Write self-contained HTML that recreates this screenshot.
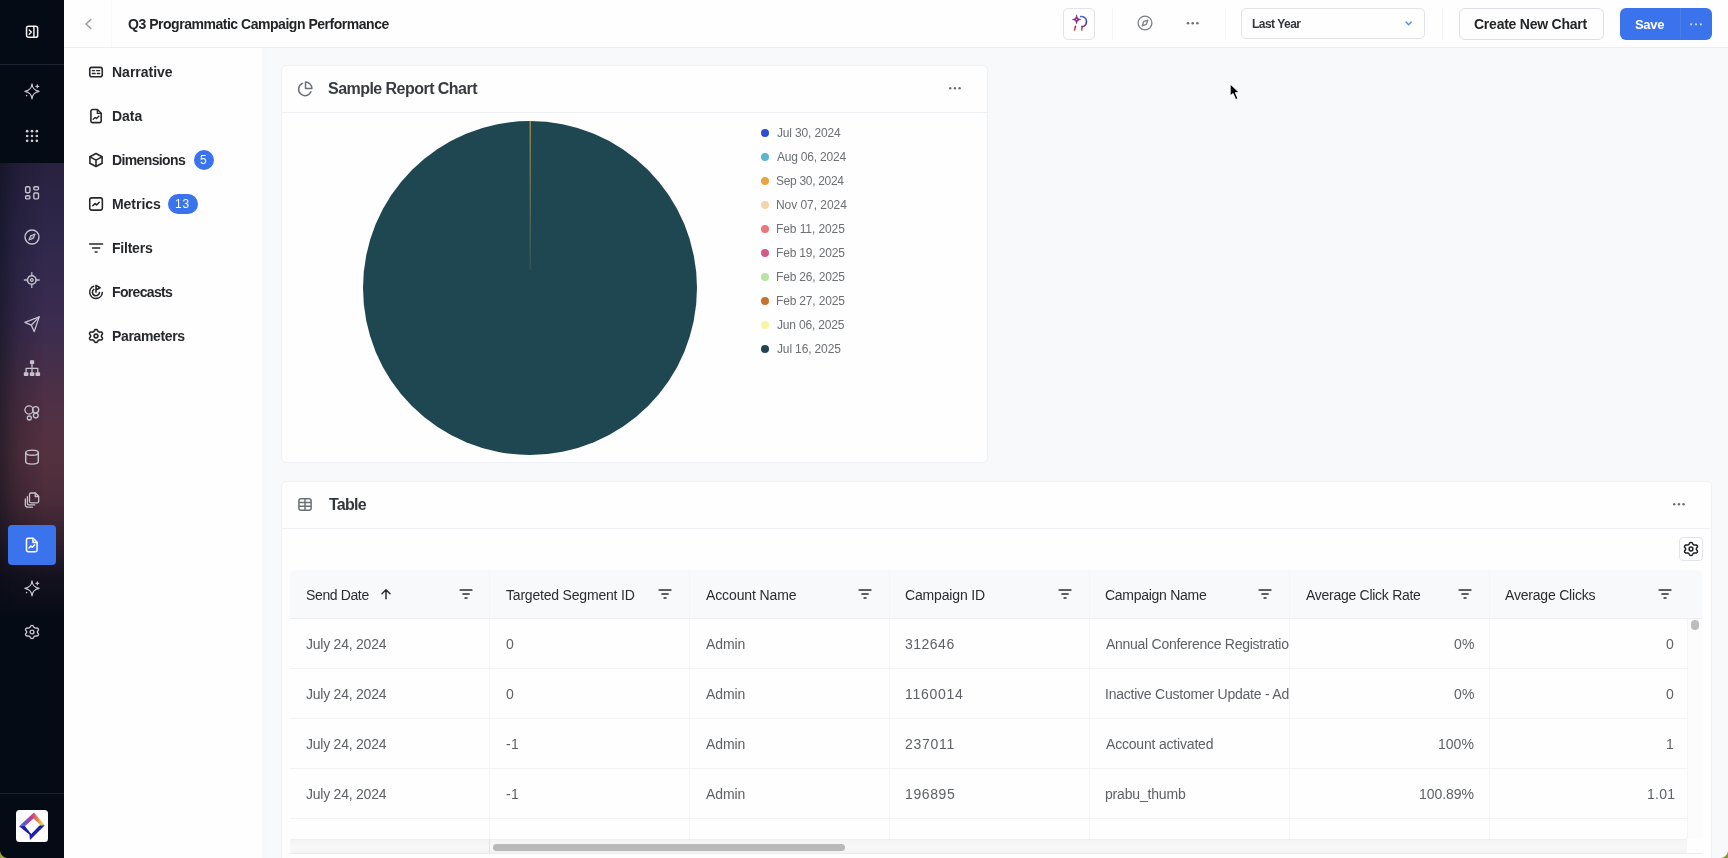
<!DOCTYPE html>
<html lang="en">
<head>
<meta charset="utf-8">
<title>Q3 Programmatic Campaign Performance</title>
<style>
*{box-sizing:border-box;margin:0;padding:0}
html,body{width:1728px;height:858px;overflow:hidden;background:#f8f9fb;font-family:"Liberation Sans",sans-serif;color:#222}
body{position:relative}
.a{position:absolute}
.t{position:absolute;white-space:nowrap;line-height:1;will-change:transform}
svg{position:absolute;overflow:visible}
#rail{position:absolute;left:0;top:0;width:64px;height:858px;background:#050b15;overflow:hidden}
#rail .g1{position:absolute;left:0;top:163px;width:64px;height:460px;background:linear-gradient(to bottom,#28213f 0px,#30284c 80px,#3b2c50 160px,#4d3046 230px,#55313f 290px,#4c2c3b 335px,#33202f 375px,#14111f 415px,#050b15 455px)}
#rail .g2{position:absolute;left:0;top:163px;width:64px;height:460px;background:linear-gradient(to right,rgba(5,11,21,.5) 0,rgba(5,11,21,.2) 28%,rgba(5,11,21,0) 70%)}
#rail .crn{position:absolute;left:0;top:850px;width:8px;height:8px;background:radial-gradient(circle at 100% 0,rgba(151,165,60,0) 7.500px,#97a53c 8.500px)}
#rail .sep{position:absolute;left:0;width:64px;height:1px;background:#1c2431}
#rail .active{position:absolute;left:8px;top:525px;width:48px;height:39.500px;border-radius:4px;background:#3a73ec}
#hdr{position:absolute;left:64px;top:0;width:1664px;height:48px;background:#fefefe;border-bottom:1px solid #eceef1}
.vd{position:absolute;width:1px;background:#f3f4f6}
.btn{position:absolute;border:1px solid #e1e3e7;border-radius:6px;background:#fefefe}
#nav{position:absolute;left:64px;top:48px;width:205px;height:810px;background:linear-gradient(to right,#fefefe 0,#fefefe 197px,#f6f7f9 199px,#f8f9fb 205px)}
.badge{position:absolute;background:#3a73ec;border-radius:10px}
.card{position:absolute;background:#fefefe;border:1px solid #f0f1f4;border-radius:5px}
.hb{position:absolute;height:1px;background:#eff0f3}
.dot{position:absolute;width:8px;height:8px;border-radius:50%}
#grid{position:absolute;left:290px;top:570px;width:1412px;height:283px;border-radius:6px 6px 4px 4px;overflow:hidden;background:#fefefe}
#grid .head{position:absolute;left:0;top:0;width:1412px;height:49px;background:#f8f9fb;border-bottom:1px solid #eceef1}
.hl{position:absolute;height:1px;background:#f2f3f5}
.vl{position:absolute;width:1px;background:#f4f5f7}
.clip{position:absolute;overflow:hidden}
.crn2{position:absolute;left:1720px;top:850px;width:8px;height:8px;background:radial-gradient(circle at 0 0,rgba(138,154,48,0) 7.500px,#8a9a30 8.500px)}

</style>
</head>
<body>
<div id="rail"><div class="g0"></div><div class="g1"></div><div class="g2"></div><div class="sep" style="top:64px"></div><div class="sep" style="top:793px"></div><div class="active"></div><svg style="left:24px;top:24px" width="16" height="16" viewBox="0 0 16 16" fill="none" stroke="#f1f1f4" stroke-width="1.5" stroke-linecap="round" stroke-linejoin="round"><rect x="2.550" y="2.350" width="11.100" height="11" rx="1.900"/><path d="M9.900 2.500v10.700"/><path d="M5.300 6l2 2.100-2 2.100"/></svg>
<svg style="left:24px;top:83.4px" width="16" height="16" viewBox="0 0 16 16" fill="none" stroke="#c6c2d0" stroke-width="1.4" stroke-linecap="round" stroke-linejoin="round"><path d="M8 1C8.500 5.600 10.200 7.400 15.100 8.400 10.200 9.400 8.500 11.200 8 15.800 7.500 11.200 5.800 9.400 .9 8.400 5.800 7.400 7.500 5.600 8 1z" stroke-width="1.300"/><path d="M13.300 1.900v2.800M11.900 3.300h2.800" stroke-width="1.200"/><circle cx="2.600" cy="12.600" r=".8" fill="#c6c2d0" stroke="none"/></svg>
<svg style="left:24px;top:127.7px" width="16" height="16" viewBox="0 0 16 16" fill="#c9c9cf" stroke="none" stroke-width="1.4" stroke-linecap="round" stroke-linejoin="round"><circle cx="3.15" cy="3.15" r="1.350"/><circle cx="3.15" cy="8" r="1.350"/><circle cx="3.15" cy="12.85" r="1.350"/><circle cx="8" cy="3.15" r="1.350"/><circle cx="8" cy="8" r="1.350"/><circle cx="8" cy="12.85" r="1.350"/><circle cx="12.85" cy="3.15" r="1.350"/><circle cx="12.85" cy="8" r="1.350"/><circle cx="12.85" cy="12.85" r="1.350"/></svg>
<svg style="left:24px;top:184.5px" width="16" height="16" viewBox="0 0 16 16" fill="none" stroke="#c6c2d0" stroke-width="1.4" stroke-linecap="round" stroke-linejoin="round"><rect x="1.600" y="1.700" width="4.300" height="6" rx="1.100"/><rect x="9.800" y="1.700" width="4.700" height="3.200" rx="1.100"/><rect x="1.600" y="10.700" width="4.300" height="3.200" rx="1.100"/><rect x="9.800" y="8" width="4.700" height="5.900" rx="1.100"/></svg>
<svg style="left:24px;top:228.7px" width="16" height="16" viewBox="0 0 16 16" fill="none" stroke="#c6c2d0" stroke-width="1.4" stroke-linecap="round" stroke-linejoin="round"><circle cx="8" cy="8" r="7"/><path d="M11 5L9.300 9.300 5 11 6.700 6.700z" fill="#c6c2d0" fill-opacity=".35" stroke-width="1.200"/></svg>
<svg style="left:24px;top:272.2px" width="16" height="16" viewBox="0 0 16 16" fill="none" stroke="#c6c2d0" stroke-width="1.4" stroke-linecap="round" stroke-linejoin="round"><circle cx="7.800" cy="8" r="4.300" stroke-width="1.600"/><circle cx="7.800" cy="8" r="1.300" stroke-width="1.300"/><path d="M7.800 .6v2.800M7.800 12.600v2.800M.4 8h2.800M12.400 8h2.800" stroke-width="1.300"/></svg>
<svg style="left:24px;top:316.2px" width="16" height="16" viewBox="0 0 16 16" fill="none" stroke="#c6c2d0" stroke-width="1.4" stroke-linecap="round" stroke-linejoin="round"><path d="M15.200 .9L.9 6.300l6.400 2.900 2.900 6.400z" stroke-width="1.300"/><path d="M15.200 .9L7.300 9.200" stroke-width="1.300"/></svg>
<svg style="left:24px;top:360.4px" width="16" height="16" viewBox="0 0 16 16" fill="none" stroke="#c6c2d0" stroke-width="1.4" stroke-linecap="round" stroke-linejoin="round"><g fill="#c6c2d0" stroke="none"><rect x="5.900" y=".3" width="4.300" height="3.700" rx=".7"/><rect x="-.2" y="12.200" width="4.600" height="3.800" rx=".7"/><rect x="5.800" y="12.200" width="4.600" height="3.800" rx=".7"/><rect x="11.500" y="12.200" width="4.600" height="3.800" rx=".7"/></g><path d="M8 4v8M2.100 12V8.300h11.700V12" stroke-width="1.300"/></svg>
<svg style="left:24px;top:404.7px" width="16" height="16" viewBox="0 0 16 16" fill="none" stroke="#c6c2d0" stroke-width="1.3" stroke-linecap="round" stroke-linejoin="round"><circle cx="5" cy="5" r="4.100"/><circle cx="11.600" cy="4.800" r="3.100"/><circle cx="11.800" cy="10.600" r="2.400"/><circle cx="5.300" cy="13" r="2"/></svg>
<svg style="left:24px;top:448.5px" width="16" height="16" viewBox="0 0 16 16" fill="none" stroke="#c6c2d0" stroke-width="1.4" stroke-linecap="round" stroke-linejoin="round"><ellipse cx="8" cy="3.700" rx="6.300" ry="2.600"/><path d="M1.700 3.700v8.800c0 1.500 2.800 2.600 6.300 2.600s6.300-1.100 6.300-2.600V3.700"/></svg>
<svg style="left:24px;top:491.8px" width="16" height="16" viewBox="0 0 16 16" fill="none" stroke="#c6c2d0" stroke-width="1.3" stroke-linecap="round" stroke-linejoin="round"><path d="M7 1h4.400l3.300 3.300v5a1.500 1.500 0 0 1-1.500 1.500H7a1.500 1.500 0 0 1-1.500-1.500V2.500A1.500 1.500 0 0 1 7 1z"/><path d="M11.200 1.200v3.300h3.300"/><path d="M3.400 4.600v6.300a2 2 0 0 0 2 2h5.400"/><path d="M1.300 7v6a2.200 2.200 0 0 0 2.200 2.200h4.900"/></svg>
<svg style="left:24px;top:536.7px" width="16" height="16" viewBox="0 0 16 16" fill="none" stroke="#ffffff" stroke-width="1.5" stroke-linecap="round" stroke-linejoin="round"><path d="M4.200 1.300h5l3.900 3.900V13a1.700 1.700 0 0 1-1.700 1.700H4.200A1.700 1.700 0 0 1 2.500 13V3a1.700 1.700 0 0 1 1.700-1.700z"/><path d="M9 1.500v3.900h3.900"/><path d="M5 11l1.900-1.900 1.400 1.100 2.400-2.300"/></svg>
<svg style="left:24px;top:580.4px" width="16" height="16" viewBox="0 0 16 16" fill="none" stroke="#c6c2d0" stroke-width="1.4" stroke-linecap="round" stroke-linejoin="round"><path d="M8 1C8.500 5.600 10.200 7.400 15.100 8.400 10.200 9.400 8.500 11.200 8 15.800 7.500 11.200 5.800 9.400 .9 8.400 5.800 7.400 7.500 5.600 8 1z" stroke-width="1.300"/><path d="M13.300 1.900v2.800M11.900 3.300h2.800" stroke-width="1.200"/><circle cx="2.600" cy="12.600" r=".8" fill="#c6c2d0" stroke="none"/></svg>
<svg style="left:24px;top:624.3px" width="16" height="16" viewBox="0 0 16 16" fill="none" stroke="#c6c2d0" stroke-width="1.4" stroke-linecap="round" stroke-linejoin="round"><path d="M13.4 8.0 13.4 7.6 13.6 7.1 14.1 6.5 14.5 5.9 14.4 5.3 14.2 4.8 13.8 4.3 13.3 4.0 12.4 4.0 11.6 4.1 11.1 4.0 10.7 3.8 10.3 3.5 9.9 3.2 9.6 2.5 9.2 1.8 8.6 1.6 8.0 1.5 7.4 1.6 6.8 1.8 6.4 2.5 6.1 3.2 5.7 3.5 5.3 3.8 4.9 4.0 4.4 4.1 3.6 4.0 2.7 4.0 2.2 4.3 1.8 4.7 1.6 5.3 1.5 5.9 1.9 6.5 2.4 7.1 2.6 7.6 2.6 8.0 2.6 8.4 2.4 8.9 1.9 9.5 1.5 10.1 1.6 10.7 1.8 11.2 2.2 11.7 2.7 12.0 3.6 12.0 4.4 11.9 4.9 12.0 5.3 12.2 5.7 12.5 6.1 12.8 6.4 13.5 6.8 14.2 7.4 14.4 8.0 14.5 8.6 14.4 9.2 14.2 9.6 13.5 9.9 12.8 10.3 12.5 10.7 12.2 11.1 12.0 11.6 11.9 12.4 12.0 13.3 12.0 13.8 11.7 14.2 11.2 14.4 10.7 14.5 10.1 14.1 9.5 13.6 8.9 13.4 8.4z"/><circle cx="8" cy="8" r="1.9"/></svg><div style="position:absolute;left:16px;top:810px;width:32px;height:32px;border-radius:3.500px;background:#fdfdfd"></div>
<svg style="left:16px;top:810px" width="32" height="32" viewBox="0 0 32 32" fill="none">
<defs><linearGradient id="lgA" x1="3" y1="0" x2="29" y2="0" gradientUnits="userSpaceOnUse"><stop offset="0" stop-color="#4a8ef0"/><stop offset=".18" stop-color="#5a55d0"/><stop offset=".5" stop-color="#c0408a"/><stop offset=".72" stop-color="#e8884a"/><stop offset=".88" stop-color="#d8d860"/><stop offset="1" stop-color="#a8d070"/></linearGradient></defs>
<path d="M3 16.200L18 2.400 28.600 15 24.600 15.400 17.600 8.600 8.600 16.400z" fill="url(#lgA)"/>
<path d="M3 16.200L28.800 15.200 14 30 13.400 24.400z" fill="#1d1fa6"/>
<path d="M9 16.300L17.600 9.600 23.600 15.600 15.200 24z" fill="#fdfdfd"/>
</svg><div class="crn"></div></div>
<!-- HEADER -->
<div id="hdr"></div>
<svg style="left:84px;top:17px" width="10" height="14" viewBox="0 0 10 14" fill="none" stroke="#96999d" stroke-width="1.400" stroke-linecap="round" stroke-linejoin="round"><path d="M6.8 2.4L2 7l4.8 4.6"/></svg>
<div class="vd" style="left:111px;top:0;height:47px;background:#f6f7f9"></div>
<div class="btn" style="left:1063px;top:7.500px;width:32px;height:32px;border-radius:5px"></div>
<svg style="left:1069px;top:13px" width="22" height="22" viewBox="0 0 22 22" fill="none" stroke-linecap="round" stroke-linejoin="round">
<defs><linearGradient id="aiA" x1="0" y1="13" x2="0" y2="18" gradientUnits="userSpaceOnUse"><stop offset="0" stop-color="#8a2080"/><stop offset=".7" stop-color="#c2407a"/><stop offset="1" stop-color="#f0b030"/></linearGradient>
<linearGradient id="aiB" x1="12" y1="3" x2="16" y2="15" gradientUnits="userSpaceOnUse"><stop offset="0" stop-color="#4a6ae0"/><stop offset=".6" stop-color="#3a3fa8"/><stop offset="1" stop-color="#b02a70"/></linearGradient></defs>
<path d="M7.6 2.2c.4 2.7 1.4 3.8 4.2 4.3-2.8.5-3.8 1.500-4.200 4.300-.4-2.800-1.400-3.800-4.200-4.300 2.800-.5 3.800-1.600 4.200-4.300z" fill="#86217f" stroke="#86217f" stroke-width=".6"/>
<circle cx="7.6" cy="6.500" r=".7" fill="#f0d8ee"/>
<path d="M11.600 3.600c3.200-.5 5.800 1.600 5.900 4.700.1 2.300-.9 3.900-2.500 4.900l-1.900.3" stroke="url(#aiB)" stroke-width="1.500"/>
<path d="M6.500 13.200L5.400 17.400" stroke="url(#aiA)" stroke-width="1.500"/>
<path d="M13.100 13.600l-.4 3.800" stroke="url(#aiA)" stroke-width="1.500"/>
</svg>
<div class="vd" style="left:1112px;top:8px;height:32px"></div>
<svg style="left:1136.500px;top:15.300px" width="16" height="16" viewBox="0 0 16 16" fill="none" stroke="#7c7f83" stroke-width="1.300" stroke-linejoin="round"><circle cx="8" cy="8" r="6.900"/><path d="M10.800 5.200L9.300 9.300 5.200 10.800 6.700 6.700z"/></svg>
<svg style="left:1186px;top:21px" width="14" height="5" viewBox="0 0 14 5" fill="#6a6d71"><circle cx="2" cy="2.300" r="1.250"/><circle cx="6.700" cy="2.300" r="1.250"/><circle cx="11.400" cy="2.300" r="1.250"/></svg>
<div class="vd" style="left:1225px;top:8px;height:32px"></div>
<div class="btn" style="left:1241px;top:7.500px;width:184px;height:31.500px;border-radius:5px"></div>
<svg style="left:1404px;top:20px" width="10" height="8" viewBox="0 0 10 8" fill="none" stroke="#4f8ce4" stroke-width="1.300" stroke-linecap="round" stroke-linejoin="round"><path d="M2 2L4.600 4.700 7.200 2"/></svg>
<div class="vd" style="left:1442px;top:8px;height:32px"></div>
<div class="btn" style="left:1459px;top:7.500px;width:144.500px;height:32px;border-color:#dcdfe3"></div>
<div class="a" style="left:1619.500px;top:7.500px;width:92.500px;height:32px;border-radius:6px;background:#3a73ec"></div>
<div class="a" style="left:1680px;top:8px;width:1px;height:31px;background:#4a7eea"></div>
<svg style="left:1689px;top:21.500px" width="14" height="5" viewBox="0 0 14 5" fill="#cfdcfa"><circle cx="2.100" cy="2.300" r="1.100"/><circle cx="7" cy="2.300" r="1.100"/><circle cx="11.900" cy="2.300" r="1.100"/></svg>

<!-- NAV -->
<div id="nav"></div>
<svg style="left:88px;top:64px" width="16" height="16" viewBox="0 0 16 16" fill="none" stroke="#26282b" stroke-width="1.600" stroke-linecap="round" stroke-linejoin="round"><rect x="1.750" y="3.400" width="12.500" height="9.400" rx="2"/><path d="M4.300 6.700h2.300M8.600 6.700h3.100M4.300 9.500h2.900M9.300 9.500h2.400" stroke-width="1.300"/></svg>
<svg style="left:88px;top:108px" width="16" height="16" viewBox="0 0 16 16" fill="none" stroke="#26282b" stroke-width="1.600" stroke-linecap="round" stroke-linejoin="round"><path d="M4.600 1.500h4.800l3.800 3.800v7.600a1.700 1.700 0 0 1-1.700 1.700H4.600a1.700 1.700 0 0 1-1.700-1.700V3.200a1.700 1.700 0 0 1 1.700-1.700z"/><path d="M9.300 1.800v3.600h3.600" stroke-width="1.300"/><path d="M5.200 11.200l1.900-1.700 1.300 1 2.500-2.300" stroke-width="1.400"/></svg>
<svg style="left:88px;top:152px" width="16" height="16" viewBox="0 0 16 16" fill="none" stroke="#26282b" stroke-width="1.600" stroke-linecap="round" stroke-linejoin="round"><path d="M8 1.500l6.100 3.300v6.400L8 14.500l-6.100-3.300V4.800z"/><path d="M2.100 4.900L8 8.100l5.900-3.200M8 8.100v6.200"/></svg>
<svg style="left:88px;top:196px" width="16" height="16" viewBox="0 0 16 16" fill="none" stroke="#26282b" stroke-width="1.600" stroke-linecap="round" stroke-linejoin="round"><rect x="1.750" y="1.900" width="12.600" height="12.200" rx="2"/><path d="M4.800 9.800l2.300-2.200 1.500 1.300 2.700-2.600" stroke-width="1.500"/></svg>
<svg style="left:88px;top:240px" width="16" height="16" viewBox="0 0 16 16" fill="none" stroke="#26282b" stroke-width="1.600" stroke-linecap="round"><path d="M1.700 4h12.800M4.600 8h7M7.200 12h1.800"/></svg>
<svg style="left:88px;top:284px" width="16" height="16" viewBox="0 0 16 16" fill="none" stroke="#26282b" stroke-width="1.600" stroke-linecap="round" stroke-linejoin="round"><path d="M5.600 2.300A6.300 6.300 0 1 0 14.300 8.500"/><path d="M5.800 5.400A3.500 3.500 0 1 0 11.400 8.600"/><path d="M8 8.300V1.400l4.100 2.300L8 6" /></svg>
<svg style="left:88px;top:328px" width="16" height="16" viewBox="0 0 16 16" fill="none" stroke="#26282b" stroke-width="1.600" stroke-linecap="round" stroke-linejoin="round"><path d="M13.4 8.0 13.4 7.6 13.6 7.1 14.1 6.5 14.5 5.9 14.4 5.3 14.2 4.8 13.8 4.3 13.3 4.0 12.4 4.0 11.6 4.1 11.1 4.0 10.7 3.8 10.3 3.5 9.9 3.2 9.6 2.5 9.2 1.8 8.6 1.6 8.0 1.5 7.4 1.6 6.8 1.8 6.4 2.5 6.1 3.2 5.7 3.5 5.3 3.8 4.9 4.0 4.4 4.1 3.6 4.0 2.7 4.0 2.2 4.3 1.8 4.7 1.6 5.3 1.5 5.9 1.9 6.5 2.4 7.1 2.6 7.6 2.6 8.0 2.6 8.4 2.4 8.9 1.9 9.5 1.5 10.1 1.6 10.7 1.8 11.2 2.2 11.7 2.7 12.0 3.6 12.0 4.4 11.9 4.9 12.0 5.3 12.2 5.7 12.5 6.1 12.8 6.4 13.5 6.8 14.2 7.4 14.4 8.0 14.5 8.6 14.4 9.2 14.2 9.6 13.5 9.9 12.8 10.3 12.5 10.7 12.2 11.1 12.0 11.6 11.9 12.4 12.0 13.3 12.0 13.8 11.7 14.2 11.2 14.4 10.7 14.5 10.1 14.1 9.5 13.6 8.9 13.4 8.4z"/><circle cx="8" cy="8" r="1.9"/></svg>
<div class="badge" style="left:193.500px;top:150px;width:20px;height:20px"></div>
<div class="badge" style="left:168px;top:194.300px;width:29.600px;height:19.400px"></div>

<!-- CHART CARD -->
<div class="card" style="left:281px;top:65px;width:707px;height:398px"></div>
<div class="hb" style="left:282px;top:112px;width:705px"></div>
<svg style="left:297px;top:80.500px" width="16" height="16" viewBox="0 0 16 16" fill="none" stroke="#6c6f73" stroke-width="1.500" stroke-linecap="round" stroke-linejoin="round"><path d="M13.900 10.800A6.400 6.400 0 1 1 5.400 2.400"/><path d="M14.900 7.500A6.400 6.400 0 0 0 8.500 1.100V7.500z"/></svg>
<svg style="left:948px;top:86px" width="14" height="5" viewBox="0 0 14 5" fill="#6a6d71"><circle cx="2.200" cy="2.300" r="1.200"/><circle cx="6.900" cy="2.300" r="1.200"/><circle cx="11.600" cy="2.300" r="1.200"/></svg>
<svg style="left:362px;top:120px" width="336" height="336" viewBox="0 0 336 336"><defs><linearGradient id="pl" x1="0" y1="1" x2="0" y2="150" gradientUnits="userSpaceOnUse"><stop offset="0" stop-color="#c9a64c"/><stop offset=".35" stop-color="#8d8a55"/><stop offset="1" stop-color="#35595a"/></linearGradient></defs><circle cx="168" cy="168" r="167" fill="#1e4751"/><path d="M168.200 1v149" stroke="url(#pl)" stroke-width="1"/></svg>
<div class="dot" style="left:761px;top:129px;background:#2b4fd0"></div>
<div class="dot" style="left:761px;top:153px;background:#5db6cb"></div>
<div class="dot" style="left:761px;top:177px;background:#e8a440"></div>
<div class="dot" style="left:761px;top:201px;background:#f4d4ab"></div>
<div class="dot" style="left:761px;top:225px;background:#e9787c"></div>
<div class="dot" style="left:761px;top:249px;background:#cf5b86"></div>
<div class="dot" style="left:761px;top:273px;background:#b8e3a2"></div>
<div class="dot" style="left:761px;top:297px;background:#c4722f"></div>
<div class="dot" style="left:761px;top:321px;background:#f6f7a2"></div>
<div class="dot" style="left:761px;top:345px;background:#1e4751"></div>

<!-- TABLE CARD -->
<div class="card" style="left:281px;top:481px;width:1431px;height:390px"></div>
<div class="hb" style="left:282px;top:528px;width:1429px"></div>
<svg style="left:297px;top:497px" width="16" height="16" viewBox="0 0 16 16" fill="none" stroke="#6c6f73" stroke-width="1.500" stroke-linejoin="round"><rect x="1.900" y="1.650" width="12.200" height="11.500" rx="2"/><path d="M1.900 5.500h12.200M1.900 9.300h12.200M8 1.700v11.400"/></svg>
<svg style="left:1672px;top:502px" width="14" height="5" viewBox="0 0 14 5" fill="#6a6d71"><circle cx="2.200" cy="2.300" r="1.200"/><circle cx="6.900" cy="2.300" r="1.200"/><circle cx="11.600" cy="2.300" r="1.200"/></svg>
<div class="btn" style="left:1679px;top:537px;width:24px;height:24px;border-radius:4px;border-color:#e2e4e8"></div>
<svg style="left:1683px;top:541px" width="16" height="16" viewBox="0 0 16 16" fill="none" stroke="#1f2124" stroke-width="1.500" stroke-linecap="round" stroke-linejoin="round"><path d="M13.4 8.0 13.4 7.6 13.6 7.1 14.1 6.5 14.5 5.9 14.4 5.3 14.2 4.8 13.8 4.3 13.3 4.0 12.4 4.0 11.6 4.1 11.1 4.0 10.7 3.8 10.3 3.5 9.9 3.2 9.6 2.5 9.2 1.8 8.6 1.6 8.0 1.5 7.4 1.6 6.8 1.8 6.4 2.5 6.1 3.2 5.7 3.5 5.3 3.8 4.9 4.0 4.4 4.1 3.6 4.0 2.7 4.0 2.2 4.3 1.8 4.7 1.6 5.3 1.5 5.9 1.9 6.5 2.4 7.1 2.6 7.6 2.6 8.0 2.6 8.4 2.4 8.9 1.9 9.5 1.5 10.1 1.6 10.7 1.8 11.2 2.2 11.7 2.7 12.0 3.6 12.0 4.4 11.9 4.9 12.0 5.3 12.2 5.7 12.5 6.1 12.8 6.4 13.5 6.8 14.2 7.4 14.4 8.0 14.5 8.6 14.4 9.2 14.2 9.6 13.5 9.9 12.8 10.3 12.5 10.7 12.2 11.1 12.0 11.6 11.9 12.4 12.0 13.3 12.0 13.8 11.7 14.2 11.2 14.4 10.7 14.5 10.1 14.1 9.5 13.6 8.9 13.4 8.4z"/><circle cx="8" cy="8" r="1.9"/></svg>
<div id="grid"><div class="head"></div>
<div class="hl" style="left:0;top:98px;width:1397px"></div>
<div class="hl" style="left:0;top:148px;width:1397px"></div>
<div class="hl" style="left:0;top:198px;width:1397px"></div>
<div class="hl" style="left:0;top:248px;width:1397px"></div>
<div class="vl" style="left:199px;top:49px;height:220px"></div><div class="vl" style="left:199px;top:0;height:48px;background:#f4f5f8"></div>
<div class="vl" style="left:399px;top:49px;height:220px"></div><div class="vl" style="left:399px;top:0;height:48px;background:#f4f5f8"></div>
<div class="vl" style="left:599px;top:49px;height:220px"></div><div class="vl" style="left:599px;top:0;height:48px;background:#f4f5f8"></div>
<div class="vl" style="left:799px;top:49px;height:220px"></div><div class="vl" style="left:799px;top:0;height:48px;background:#f4f5f8"></div>
<div class="vl" style="left:999px;top:49px;height:220px"></div><div class="vl" style="left:999px;top:0;height:48px;background:#f4f5f8"></div>
<div class="vl" style="left:1199px;top:49px;height:220px"></div><div class="vl" style="left:1199px;top:0;height:48px;background:#f4f5f8"></div>
<div class="vl" style="left:1397px;top:49px;height:220px"></div>
<div class="a" style="left:1398px;top:49px;width:14px;height:220px;background:#fcfcfc"></div>
<div class="a" style="left:1401px;top:50px;width:8px;height:10px;border-radius:4px;background:#bdbdbd"></div>
<div class="a" style="left:0;top:269px;width:1397px;height:14px;background:linear-gradient(#f4f4f4,#f8f8f8 50%,#f3f3f3);border-top:1px solid #efefef"></div>
<div class="a" style="left:199px;top:269px;width:1px;height:14px;background:#e4e4e4"></div>
<div class="a" style="left:203px;top:273.500px;width:352px;height:7px;border-radius:4px;background:#b9b9b9"></div>
</div>
<div class="a" style="left:290px;top:853px;width:1412px;height:1px;background:#ececec"></div>

<svg style="left:457.8px;top:586px" width="16" height="16" viewBox="0 0 16 16" fill="none" stroke="#2a2d31" stroke-width="1.700" stroke-linecap="round"><path d="M2.300 4h11.500M5.100 8h5.900M7.200 12h1.700"/></svg>
<svg style="left:657.3px;top:586px" width="16" height="16" viewBox="0 0 16 16" fill="none" stroke="#2a2d31" stroke-width="1.700" stroke-linecap="round"><path d="M2.300 4h11.500M5.100 8h5.900M7.200 12h1.700"/></svg>
<svg style="left:857.1px;top:586px" width="16" height="16" viewBox="0 0 16 16" fill="none" stroke="#2a2d31" stroke-width="1.700" stroke-linecap="round"><path d="M2.300 4h11.500M5.100 8h5.900M7.200 12h1.700"/></svg>
<svg style="left:1056.9px;top:586px" width="16" height="16" viewBox="0 0 16 16" fill="none" stroke="#2a2d31" stroke-width="1.700" stroke-linecap="round"><path d="M2.300 4h11.500M5.100 8h5.900M7.200 12h1.700"/></svg>
<svg style="left:1256.7px;top:586px" width="16" height="16" viewBox="0 0 16 16" fill="none" stroke="#2a2d31" stroke-width="1.700" stroke-linecap="round"><path d="M2.300 4h11.500M5.100 8h5.900M7.200 12h1.700"/></svg>
<svg style="left:1456.6px;top:586px" width="16" height="16" viewBox="0 0 16 16" fill="none" stroke="#2a2d31" stroke-width="1.700" stroke-linecap="round"><path d="M2.300 4h11.500M5.100 8h5.900M7.200 12h1.700"/></svg>
<svg style="left:1656.9px;top:586px" width="16" height="16" viewBox="0 0 16 16" fill="none" stroke="#2a2d31" stroke-width="1.700" stroke-linecap="round"><path d="M2.300 4h11.500M5.100 8h5.900M7.200 12h1.700"/></svg>
<svg style="left:377.500px;top:586px" width="16" height="16" viewBox="0 0 16 16" fill="none" stroke="#2a2d31" stroke-width="1.500" stroke-linecap="round" stroke-linejoin="round"><path d="M8 12.700V4M4 7.700L8 3.700l4 4"/></svg>
<svg style="left:1229px;top:83.300px" width="12" height="18" viewBox="0 0 12 18"><path d="M1.100 .6v12.700l2.900-2.550 2.600 5.950 2.400-1.050-2.500-5.850 4-.25z" fill="#05060c" stroke="#ffffff" stroke-width="1.100" stroke-linejoin="round"/></svg>
<div class="crn2"></div>

<span class="t" style="left:127.5px;top:16.6px;font-size:14px;font-weight:700;color:#222426;letter-spacing:-0.471px">Q3 Programmatic Campaign Performance</span>
<span class="t" style="left:111.5px;top:65.4px;font-size:14px;font-weight:700;color:#26282b;letter-spacing:-0.007px">Narrative</span>
<span class="t" style="left:111.5px;top:109.4px;font-size:14px;font-weight:700;color:#26282b;letter-spacing:-0.031px">Data</span>
<span class="t" style="left:111.5px;top:153.4px;font-size:14px;font-weight:700;color:#26282b;letter-spacing:-0.631px">Dimensions</span>
<span class="t" style="left:111.5px;top:197.4px;font-size:14px;font-weight:700;color:#26282b;letter-spacing:-0.038px">Metrics</span>
<span class="t" style="left:111.5px;top:241.4px;font-size:14px;font-weight:700;color:#26282b;letter-spacing:-0.223px">Filters</span>
<span class="t" style="left:111.5px;top:285.4px;font-size:14px;font-weight:700;color:#26282b;letter-spacing:-0.669px">Forecasts</span>
<span class="t" style="left:111.5px;top:329.4px;font-size:14px;font-weight:700;color:#26282b;letter-spacing:-0.363px">Parameters</span>
<span class="t" style="left:200.3px;top:154.2px;font-size:12px;font-weight:400;color:#ffffff">5</span>
<span class="t" style="left:175.3px;top:198.1px;font-size:12px;font-weight:400;color:#ffffff;letter-spacing:0.711px">13</span>
<span class="t" style="left:1252.0px;top:17.7px;font-size:12px;font-weight:700;color:#34363a;letter-spacing:-0.521px">Last Year</span>
<span class="t" style="left:1473.5px;top:16.7px;font-size:14px;font-weight:700;color:#222426;letter-spacing:-0.236px">Create New Chart</span>
<span class="t" style="left:1635.0px;top:17.8px;font-size:13px;font-weight:700;color:#ffffff;letter-spacing:-0.332px">Save</span>
<span class="t" style="left:328.1px;top:80.8px;font-size:16px;font-weight:700;color:#383b3f;letter-spacing:-0.537px">Sample Report Chart</span>
<span class="t" style="left:329.3px;top:497.0px;font-size:16px;font-weight:700;color:#33363a;letter-spacing:-0.726px">Table</span>
<span class="t" style="left:777.2px;top:127.3px;font-size:12px;font-weight:400;color:#6c6f73;letter-spacing:-0.157px">Jul 30, 2024</span>
<span class="t" style="left:777.2px;top:151.3px;font-size:12px;font-weight:400;color:#6c6f73;letter-spacing:-0.207px">Aug 06, 2024</span>
<span class="t" style="left:776.2px;top:175.3px;font-size:12px;font-weight:400;color:#6c6f73;letter-spacing:-0.317px">Sep 30, 2024</span>
<span class="t" style="left:776.2px;top:199.3px;font-size:12px;font-weight:400;color:#6c6f73;letter-spacing:-0.051px">Nov 07, 2024</span>
<span class="t" style="left:776.2px;top:223.3px;font-size:12px;font-weight:400;color:#6c6f73;letter-spacing:-0.091px">Feb 11, 2025</span>
<span class="t" style="left:776.2px;top:247.3px;font-size:12px;font-weight:400;color:#6c6f73;letter-spacing:-0.172px">Feb 19, 2025</span>
<span class="t" style="left:776.2px;top:271.3px;font-size:12px;font-weight:400;color:#6c6f73;letter-spacing:-0.172px">Feb 26, 2025</span>
<span class="t" style="left:776.2px;top:295.3px;font-size:12px;font-weight:400;color:#6c6f73;letter-spacing:-0.172px">Feb 27, 2025</span>
<span class="t" style="left:777.2px;top:319.3px;font-size:12px;font-weight:400;color:#6c6f73;letter-spacing:-0.173px">Jun 06, 2025</span>
<span class="t" style="left:777.2px;top:343.3px;font-size:12px;font-weight:400;color:#6c6f73;letter-spacing:-0.141px">Jul 16, 2025</span>
<span class="t" style="left:305.5px;top:587.5px;font-size:14px;font-weight:400;color:#2a2d31;letter-spacing:-0.374px">Send Date</span>
<span class="t" style="left:506.1px;top:587.5px;font-size:14px;font-weight:400;color:#2a2d31;letter-spacing:-0.197px">Targeted Segment ID</span>
<span class="t" style="left:706.0px;top:587.5px;font-size:14px;font-weight:400;color:#2a2d31;letter-spacing:-0.116px">Account Name</span>
<span class="t" style="left:905.0px;top:587.5px;font-size:14px;font-weight:400;color:#2a2d31;letter-spacing:-0.164px">Campaign ID</span>
<span class="t" style="left:1104.8px;top:587.5px;font-size:14px;font-weight:400;color:#2a2d31;letter-spacing:-0.274px">Campaign Name</span>
<span class="t" style="left:1306.1px;top:587.5px;font-size:14px;font-weight:400;color:#2a2d31;letter-spacing:-0.276px">Average Click Rate</span>
<span class="t" style="left:1504.5px;top:587.5px;font-size:14px;font-weight:400;color:#2a2d31;letter-spacing:-0.198px">Average Clicks</span>
<span class="t" style="left:305.5px;top:637.3px;font-size:14px;font-weight:400;color:#5e6165;letter-spacing:-0.235px">July 24, 2024</span>
<span class="t" style="left:506.1px;top:637.3px;font-size:14px;font-weight:400;color:#5e6165">0</span>
<span class="t" style="left:706.0px;top:637.3px;font-size:14px;font-weight:400;color:#5e6165;letter-spacing:-0.124px">Admin</span>
<span class="t" style="left:905.0px;top:637.3px;font-size:14px;font-weight:400;color:#5e6165;letter-spacing:0.495px">312646</span>
<span class="t" style="left:1454.0px;top:637.3px;font-size:14px;font-weight:400;color:#5e6165;letter-spacing:0.146px">0%</span>
<span class="t" style="left:1666.0px;top:637.3px;font-size:14px;font-weight:400;color:#5e6165">0</span>
<span class="t" style="left:305.5px;top:687.3px;font-size:14px;font-weight:400;color:#5e6165;letter-spacing:-0.235px">July 24, 2024</span>
<span class="t" style="left:506.1px;top:687.3px;font-size:14px;font-weight:400;color:#5e6165">0</span>
<span class="t" style="left:706.0px;top:687.3px;font-size:14px;font-weight:400;color:#5e6165;letter-spacing:-0.124px">Admin</span>
<span class="t" style="left:905.0px;top:687.3px;font-size:14px;font-weight:400;color:#5e6165;letter-spacing:0.714px">1160014</span>
<span class="t" style="left:1454.0px;top:687.3px;font-size:14px;font-weight:400;color:#5e6165;letter-spacing:0.146px">0%</span>
<span class="t" style="left:1666.0px;top:687.3px;font-size:14px;font-weight:400;color:#5e6165">0</span>
<span class="t" style="left:305.5px;top:737.3px;font-size:14px;font-weight:400;color:#5e6165;letter-spacing:-0.235px">July 24, 2024</span>
<span class="t" style="left:506.1px;top:737.3px;font-size:14px;font-weight:400;color:#5e6165;letter-spacing:0.383px">-1</span>
<span class="t" style="left:706.0px;top:737.3px;font-size:14px;font-weight:400;color:#5e6165;letter-spacing:-0.124px">Admin</span>
<span class="t" style="left:905.0px;top:737.3px;font-size:14px;font-weight:400;color:#5e6165;letter-spacing:0.705px">237011</span>
<span class="t" style="left:1437.5px;top:737.3px;font-size:14px;font-weight:400;color:#5e6165;letter-spacing:0.014px">100%</span>
<span class="t" style="left:1666.0px;top:737.3px;font-size:14px;font-weight:400;color:#5e6165">1</span>
<span class="t" style="left:305.5px;top:787.3px;font-size:14px;font-weight:400;color:#5e6165;letter-spacing:-0.235px">July 24, 2024</span>
<span class="t" style="left:506.1px;top:787.3px;font-size:14px;font-weight:400;color:#5e6165;letter-spacing:0.383px">-1</span>
<span class="t" style="left:706.0px;top:787.3px;font-size:14px;font-weight:400;color:#5e6165;letter-spacing:-0.124px">Admin</span>
<span class="t" style="left:905.0px;top:787.3px;font-size:14px;font-weight:400;color:#5e6165;letter-spacing:0.602px">196895</span>
<span class="t" style="left:1418.5px;top:787.3px;font-size:14px;font-weight:400;color:#5e6165;letter-spacing:-0.070px">100.89%</span>
<span class="t" style="left:1646.9px;top:787.3px;font-size:14px;font-weight:400;color:#5e6165;letter-spacing:0.227px">1.01</span>
<span class="t" style="left:1105.8px;top:737.3px;font-size:14px;font-weight:400;color:#5e6165;letter-spacing:-0.189px">Account activated</span>
<span class="t" style="left:1104.8px;top:787.3px;font-size:14px;font-weight:400;color:#5e6165;letter-spacing:-0.182px">prabu_thumb</span>
<div class="clip" style="left:1105.8px;top:635.3px;width:183.4px;height:20px"><span class="t" style="left:0;top:2px;font-size:14px;font-weight:400;color:#5e6165;letter-spacing:-0.274px">Annual Conference Registration</span></div>
<div class="clip" style="left:1104.8px;top:685.3px;width:184.4px;height:20px"><span class="t" style="left:0;top:2px;font-size:14px;font-weight:400;color:#5e6165;letter-spacing:-0.230px">Inactive Customer Update - Admin</span></div>
</body>
</html>
